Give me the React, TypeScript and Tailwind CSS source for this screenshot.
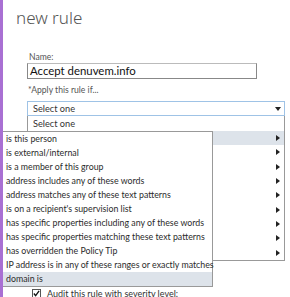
import React from 'react';

const conditions = [
  'is this person',
  'is external/internal',
  'is a member of this group',
  'address includes any of these words',
  'address matches any of these text patterns',
  "is on a recipient's supervision list",
  'has specific properties including any of these words',
  'has specific properties matching these text patterns',
  'has overridden the Policy Tip',
  'IP address is in any of these ranges or exactly matches',
  'domain is',
];

const Arrow = () => (
  <svg width="4" height="6" viewBox="0 0 4 6" className="block">
    <path d="M0 0 L4 3 L0 6 Z" fill="#222" />
  </svg>
);

export default function App() {
  return (
    <div
      className="relative flex w-[290px] h-[297px] overflow-hidden bg-white text-[#333]"
      style={{ fontFamily: 'Lato, "Noto Sans", sans-serif' }}
    >
      <div className="w-[3px] shrink-0 bg-[#a970d3]" />

      <div className="flex-1 flex flex-col">
        <h1
          className="pl-[13px] pt-[8px] text-[17px] font-light leading-[20px] text-[#555]"
          style={{ fontFamily: '"Noto Sans", sans-serif' }}
        >
          new rule
        </h1>

        <div className="ml-[24px] mt-[24px] w-[258px] flex flex-col">
          <label className="text-[8.6px] leading-[11px] text-[#555] pl-[2px]">Name:</label>
          <div className="w-[230px] h-[16px] border border-[#888] border-t-[#bbb] flex items-center pl-[2px] text-[11.4px] text-[#111]">
            Accept denuvem.info
          </div>

          <label className="mt-[6px] text-[8.6px] leading-[11px] text-[#555] pl-[1px]">*Apply this rule if...</label>

          <div className="relative mt-[5px]">
            <div className="h-[15px] border border-[#9fc3e6] flex items-center justify-between pl-[5px] pr-[3px] text-[9.2px]">
              <span>Select one</span>
              <svg width="6" height="4" viewBox="0 0 6 4">
                <path d="M0 0 L6 0 L3 4 Z" fill="#222" />
              </svg>
            </div>
            <div className="absolute left-0 right-0 top-full border-x border-b border-[#999] bg-white">
              <div className="h-[15px] flex items-center pl-[5px] text-[9.2px]">Select one</div>
              {Array.from({ length: 9 }).map((_, i) => (
                <div
                  key={i}
                  className={`h-[14.3px] flex items-center justify-end pr-[4px] ${i === 0 ? 'bg-[#dde3ea]' : ''}`}
                >
                  <Arrow />
                </div>
              ))}
            </div>
          </div>
        </div>

        <div className="mt-auto ml-[29px] mb-[-3px] flex items-center gap-[6px] text-[9px] text-[#333]">
          <div className="w-[9px] h-[9px] border border-[#555] flex items-center justify-center">
            <svg width="7" height="7" viewBox="0 0 8 8">
              <path d="M1 4 L3 6.5 L7 1" stroke="#111" strokeWidth="1.5" fill="none" />
            </svg>
          </div>
          <span>Audit this rule with severity level:</span>
        </div>
      </div>

      <ul className="absolute left-[3px] top-[131px] w-[210px] border-y border-r border-[#999] bg-white text-[#2b2b2b]">
        {conditions.map((c, i) => (
          <li
            key={c}
            className={`h-[14px] flex items-center pl-[3px] text-[8.8px] whitespace-nowrap ${
              i === conditions.length - 1 ? 'bg-[#dde3ea]' : ''
            }`}
          >
            {c}
          </li>
        ))}
      </ul>
    </div>
  );
}
